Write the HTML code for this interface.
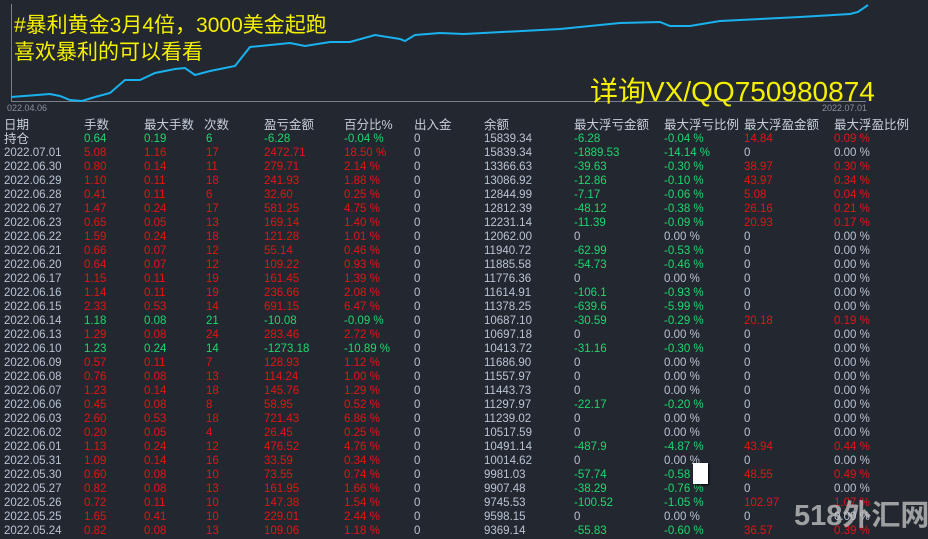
<!DOCTYPE html>
<html><head><meta charset="utf-8"><style>
*{margin:0;padding:0}
body{width:928px;height:539px;background:#232830;overflow:hidden;position:relative;font-family:"Liberation Sans","Noto Sans CJK SC",sans-serif}
.r{position:absolute;left:0;height:14px;width:928px;font-size:11.5px;line-height:14px;white-space:nowrap}
.r span{position:absolute;top:0}
.g{color:#1ed66e}.d{color:#e31414}.w{color:#b9c3d3}
.c1{left:4px}.c2{left:84px}.c3{left:144px}.c4{left:206px}.c5{left:264px}.c6{left:344px}.c7{left:414px}.c8{left:484px}.c9{left:574px}.c10{left:664px}.c11{left:744px}.c12{left:834px}
.h{font-size:12.5px;color:#c6ceda}
.y{position:absolute;color:#f5f000;font-family:"Liberation Sans","Noto Sans CJK SC",sans-serif;white-space:nowrap}
</style></head><body>
<svg width="928" height="112" style="position:absolute;left:0;top:0">
<line x1="11.5" y1="4" x2="11.5" y2="101" stroke="#7a7f88"/>
<line x1="11" y1="101.5" x2="866" y2="101.5" stroke="#7a7f88"/>
<polyline fill="none" stroke="#19b2ee" stroke-width="2" points="11,97 50,94 60,96 70,100 82,101 95,97 110,93 125,80 140,80 155,73 175,69 185,68 195,75 210,71 235,66 250,47 290,43 305,46 330,42 350,42 375,35 400,39 405,41 415,35 440,33 464,34 560,29 620,23 660,22 670,26 690,26 720,21 800,17 850,14 858,12 868,5"/>
<text x="7" y="111" font-size="9" fill="#8a9099" font-family="Liberation Sans">022.04.06</text>
<text x="822" y="111" font-size="9" fill="#8a9099" font-family="Liberation Sans">2022.07.01</text>
</svg>
<div class="y" style="left:14px;top:9px;font-size:21px">#暴利黄金3月4倍，3000美金起跑</div>
<div class="y" style="left:14px;top:36px;font-size:21px">喜欢暴利的可以看看</div>
<div class="y" style="left:590px;top:70px;font-size:28px">详询VX/QQ750980874</div>

<div class="r h" style="top:118px"><span class="c1">日期</span><span class="c2">手数</span><span class="c3">最大手数</span><span class="c4" style="left:204px">次数</span><span class="c5">盈亏金额</span><span class="c6">百分比%</span><span class="c7">出入金</span><span class="c8">余额</span><span class="c9">最大浮亏金额</span><span class="c10">最大浮亏比例</span><span class="c11">最大浮盈金额</span><span class="c12">最大浮盈比例</span></div>
<div class="r" style="top:132px"><span class="c1 h">持仓</span><span class="c2 g">0.64</span><span class="c3 g">0.19</span><span class="c4 g">6</span><span class="c5 g">-6.28</span><span class="c6 g">-0.04 %</span><span class="c7 w">0</span><span class="c8 w">15839.34</span><span class="c9 g">-6.28</span><span class="c10 g">-0.04 %</span><span class="c11 d">14.84</span><span class="c12 d">0.09 %</span></div>

<div class="r" style="top:146px"><span class="c1 w">2022.07.01</span><span class="c2 d">5.08</span><span class="c3 d">1.16</span><span class="c4 d">17</span><span class="c5 d">2472.71</span><span class="c6 d">18.50 %</span><span class="c7 w">0</span><span class="c8 w">15839.34</span><span class="c9 g">-1889.53</span><span class="c10 g">-14.14 %</span><span class="c11 w">0</span><span class="c12 w">0.00 %</span></div>
<div class="r" style="top:160px"><span class="c1 w">2022.06.30</span><span class="c2 d">0.80</span><span class="c3 d">0.14</span><span class="c4 d">11</span><span class="c5 d">279.71</span><span class="c6 d">2.14 %</span><span class="c7 w">0</span><span class="c8 w">13366.63</span><span class="c9 g">-39.63</span><span class="c10 g">-0.30 %</span><span class="c11 d">38.97</span><span class="c12 d">0.30 %</span></div>
<div class="r" style="top:174px"><span class="c1 w">2022.06.29</span><span class="c2 d">1.10</span><span class="c3 d">0.11</span><span class="c4 d">18</span><span class="c5 d">241.93</span><span class="c6 d">1.88 %</span><span class="c7 w">0</span><span class="c8 w">13086.92</span><span class="c9 g">-12.86</span><span class="c10 g">-0.10 %</span><span class="c11 d">43.97</span><span class="c12 d">0.34 %</span></div>
<div class="r" style="top:188px"><span class="c1 w">2022.06.28</span><span class="c2 d">0.41</span><span class="c3 d">0.11</span><span class="c4 d">6</span><span class="c5 d">32.60</span><span class="c6 d">0.25 %</span><span class="c7 w">0</span><span class="c8 w">12844.99</span><span class="c9 g">-7.17</span><span class="c10 g">-0.06 %</span><span class="c11 d">5.08</span><span class="c12 d">0.04 %</span></div>
<div class="r" style="top:202px"><span class="c1 w">2022.06.27</span><span class="c2 d">1.47</span><span class="c3 d">0.24</span><span class="c4 d">17</span><span class="c5 d">581.25</span><span class="c6 d">4.75 %</span><span class="c7 w">0</span><span class="c8 w">12812.39</span><span class="c9 g">-48.12</span><span class="c10 g">-0.38 %</span><span class="c11 d">26.16</span><span class="c12 d">0.21 %</span></div>
<div class="r" style="top:216px"><span class="c1 w">2022.06.23</span><span class="c2 d">0.65</span><span class="c3 d">0.05</span><span class="c4 d">13</span><span class="c5 d">169.14</span><span class="c6 d">1.40 %</span><span class="c7 w">0</span><span class="c8 w">12231.14</span><span class="c9 g">-11.39</span><span class="c10 g">-0.09 %</span><span class="c11 d">20.93</span><span class="c12 d">0.17 %</span></div>
<div class="r" style="top:230px"><span class="c1 w">2022.06.22</span><span class="c2 d">1.59</span><span class="c3 d">0.24</span><span class="c4 d">18</span><span class="c5 d">121.28</span><span class="c6 d">1.01 %</span><span class="c7 w">0</span><span class="c8 w">12062.00</span><span class="c9 w">0</span><span class="c10 w">0.00 %</span><span class="c11 w">0</span><span class="c12 w">0.00 %</span></div>
<div class="r" style="top:244px"><span class="c1 w">2022.06.21</span><span class="c2 d">0.66</span><span class="c3 d">0.07</span><span class="c4 d">12</span><span class="c5 d">55.14</span><span class="c6 d">0.46 %</span><span class="c7 w">0</span><span class="c8 w">11940.72</span><span class="c9 g">-62.99</span><span class="c10 g">-0.53 %</span><span class="c11 w">0</span><span class="c12 w">0.00 %</span></div>
<div class="r" style="top:258px"><span class="c1 w">2022.06.20</span><span class="c2 d">0.64</span><span class="c3 d">0.07</span><span class="c4 d">12</span><span class="c5 d">109.22</span><span class="c6 d">0.93 %</span><span class="c7 w">0</span><span class="c8 w">11885.58</span><span class="c9 g">-54.73</span><span class="c10 g">-0.46 %</span><span class="c11 w">0</span><span class="c12 w">0.00 %</span></div>
<div class="r" style="top:272px"><span class="c1 w">2022.06.17</span><span class="c2 d">1.15</span><span class="c3 d">0.11</span><span class="c4 d">19</span><span class="c5 d">161.45</span><span class="c6 d">1.39 %</span><span class="c7 w">0</span><span class="c8 w">11776.36</span><span class="c9 w">0</span><span class="c10 w">0.00 %</span><span class="c11 w">0</span><span class="c12 w">0.00 %</span></div>
<div class="r" style="top:286px"><span class="c1 w">2022.06.16</span><span class="c2 d">1.14</span><span class="c3 d">0.11</span><span class="c4 d">19</span><span class="c5 d">236.66</span><span class="c6 d">2.08 %</span><span class="c7 w">0</span><span class="c8 w">11614.91</span><span class="c9 g">-106.1</span><span class="c10 g">-0.93 %</span><span class="c11 w">0</span><span class="c12 w">0.00 %</span></div>
<div class="r" style="top:300px"><span class="c1 w">2022.06.15</span><span class="c2 d">2.33</span><span class="c3 d">0.53</span><span class="c4 d">14</span><span class="c5 d">691.15</span><span class="c6 d">6.47 %</span><span class="c7 w">0</span><span class="c8 w">11378.25</span><span class="c9 g">-639.6</span><span class="c10 g">-5.99 %</span><span class="c11 w">0</span><span class="c12 w">0.00 %</span></div>
<div class="r" style="top:314px"><span class="c1 w">2022.06.14</span><span class="c2 g">1.18</span><span class="c3 g">0.08</span><span class="c4 g">21</span><span class="c5 g">-10.08</span><span class="c6 g">-0.09 %</span><span class="c7 w">0</span><span class="c8 w">10687.10</span><span class="c9 g">-30.59</span><span class="c10 g">-0.29 %</span><span class="c11 d">20.18</span><span class="c12 d">0.19 %</span></div>
<div class="r" style="top:328px"><span class="c1 w">2022.06.13</span><span class="c2 d">1.29</span><span class="c3 d">0.08</span><span class="c4 d">24</span><span class="c5 d">283.46</span><span class="c6 d">2.72 %</span><span class="c7 w">0</span><span class="c8 w">10697.18</span><span class="c9 w">0</span><span class="c10 w">0.00 %</span><span class="c11 w">0</span><span class="c12 w">0.00 %</span></div>
<div class="r" style="top:342px"><span class="c1 w">2022.06.10</span><span class="c2 g">1.23</span><span class="c3 g">0.24</span><span class="c4 g">14</span><span class="c5 g">-1273.18</span><span class="c6 g">-10.89 %</span><span class="c7 w">0</span><span class="c8 w">10413.72</span><span class="c9 g">-31.16</span><span class="c10 g">-0.30 %</span><span class="c11 w">0</span><span class="c12 w">0.00 %</span></div>
<div class="r" style="top:356px"><span class="c1 w">2022.06.09</span><span class="c2 d">0.57</span><span class="c3 d">0.11</span><span class="c4 d">7</span><span class="c5 d">128.93</span><span class="c6 d">1.12 %</span><span class="c7 w">0</span><span class="c8 w">11686.90</span><span class="c9 w">0</span><span class="c10 w">0.00 %</span><span class="c11 w">0</span><span class="c12 w">0.00 %</span></div>
<div class="r" style="top:370px"><span class="c1 w">2022.06.08</span><span class="c2 d">0.76</span><span class="c3 d">0.08</span><span class="c4 d">13</span><span class="c5 d">114.24</span><span class="c6 d">1.00 %</span><span class="c7 w">0</span><span class="c8 w">11557.97</span><span class="c9 w">0</span><span class="c10 w">0.00 %</span><span class="c11 w">0</span><span class="c12 w">0.00 %</span></div>
<div class="r" style="top:384px"><span class="c1 w">2022.06.07</span><span class="c2 d">1.23</span><span class="c3 d">0.14</span><span class="c4 d">18</span><span class="c5 d">145.76</span><span class="c6 d">1.29 %</span><span class="c7 w">0</span><span class="c8 w">11443.73</span><span class="c9 w">0</span><span class="c10 w">0.00 %</span><span class="c11 w">0</span><span class="c12 w">0.00 %</span></div>
<div class="r" style="top:398px"><span class="c1 w">2022.06.06</span><span class="c2 d">0.45</span><span class="c3 d">0.08</span><span class="c4 d">8</span><span class="c5 d">58.95</span><span class="c6 d">0.52 %</span><span class="c7 w">0</span><span class="c8 w">11297.97</span><span class="c9 g">-22.17</span><span class="c10 g">-0.20 %</span><span class="c11 w">0</span><span class="c12 w">0.00 %</span></div>
<div class="r" style="top:412px"><span class="c1 w">2022.06.03</span><span class="c2 d">2.60</span><span class="c3 d">0.53</span><span class="c4 d">18</span><span class="c5 d">721.43</span><span class="c6 d">6.86 %</span><span class="c7 w">0</span><span class="c8 w">11239.02</span><span class="c9 w">0</span><span class="c10 w">0.00 %</span><span class="c11 w">0</span><span class="c12 w">0.00 %</span></div>
<div class="r" style="top:426px"><span class="c1 w">2022.06.02</span><span class="c2 d">0.20</span><span class="c3 d">0.05</span><span class="c4 d">4</span><span class="c5 d">26.45</span><span class="c6 d">0.25 %</span><span class="c7 w">0</span><span class="c8 w">10517.59</span><span class="c9 w">0</span><span class="c10 w">0.00 %</span><span class="c11 w">0</span><span class="c12 w">0.00 %</span></div>
<div class="r" style="top:440px"><span class="c1 w">2022.06.01</span><span class="c2 d">1.13</span><span class="c3 d">0.24</span><span class="c4 d">12</span><span class="c5 d">476.52</span><span class="c6 d">4.76 %</span><span class="c7 w">0</span><span class="c8 w">10491.14</span><span class="c9 g">-487.9</span><span class="c10 g">-4.87 %</span><span class="c11 d">43.94</span><span class="c12 d">0.44 %</span></div>
<div class="r" style="top:454px"><span class="c1 w">2022.05.31</span><span class="c2 d">1.09</span><span class="c3 d">0.14</span><span class="c4 d">16</span><span class="c5 d">33.59</span><span class="c6 d">0.34 %</span><span class="c7 w">0</span><span class="c8 w">10014.62</span><span class="c9 w">0</span><span class="c10 w">0.00 %</span><span class="c11 w">0</span><span class="c12 w">0.00 %</span></div>
<div class="r" style="top:468px"><span class="c1 w">2022.05.30</span><span class="c2 d">0.60</span><span class="c3 d">0.08</span><span class="c4 d">10</span><span class="c5 d">73.55</span><span class="c6 d">0.74 %</span><span class="c7 w">0</span><span class="c8 w">9981.03</span><span class="c9 g">-57.74</span><span class="c10 g">-0.58 %</span><span class="c11 d">48.55</span><span class="c12 d">0.49 %</span></div>
<div class="r" style="top:482px"><span class="c1 w">2022.05.27</span><span class="c2 d">0.82</span><span class="c3 d">0.08</span><span class="c4 d">13</span><span class="c5 d">161.95</span><span class="c6 d">1.66 %</span><span class="c7 w">0</span><span class="c8 w">9907.48</span><span class="c9 g">-38.29</span><span class="c10 g">-0.76 %</span><span class="c11 w">0</span><span class="c12 w">0.00 %</span></div>
<div class="r" style="top:496px"><span class="c1 w">2022.05.26</span><span class="c2 d">0.72</span><span class="c3 d">0.11</span><span class="c4 d">10</span><span class="c5 d">147.38</span><span class="c6 d">1.54 %</span><span class="c7 w">0</span><span class="c8 w">9745.53</span><span class="c9 g">-100.52</span><span class="c10 g">-1.05 %</span><span class="c11 d">102.97</span><span class="c12 d">1.07 %</span></div>
<div class="r" style="top:510px"><span class="c1 w">2022.05.25</span><span class="c2 d">1.65</span><span class="c3 d">0.41</span><span class="c4 d">10</span><span class="c5 d">229.01</span><span class="c6 d">2.44 %</span><span class="c7 w">0</span><span class="c8 w">9598.15</span><span class="c9 w">0</span><span class="c10 w">0.00 %</span><span class="c11 w">0</span><span class="c12 w">0.00 %</span></div>
<div class="r" style="top:524px"><span class="c1 w">2022.05.24</span><span class="c2 d">0.82</span><span class="c3 d">0.08</span><span class="c4 d">13</span><span class="c5 d">109.06</span><span class="c6 d">1.18 %</span><span class="c7 w">0</span><span class="c8 w">9369.14</span><span class="c9 g">-55.83</span><span class="c10 g">-0.60 %</span><span class="c11 d">36.57</span><span class="c12 d">0.39 %</span></div>

<div style="position:absolute;left:693px;top:463px;width:15px;height:21px;background:#fff;box-shadow:1px 1px 2px #000"></div>
<div style="position:absolute;left:794px;top:498px;font-size:29px;font-weight:bold;color:rgba(200,200,200,0.75);font-family:'Liberation Sans','Noto Sans CJK SC',sans-serif;white-space:nowrap;line-height:36px">518外汇网</div>
</body></html>
